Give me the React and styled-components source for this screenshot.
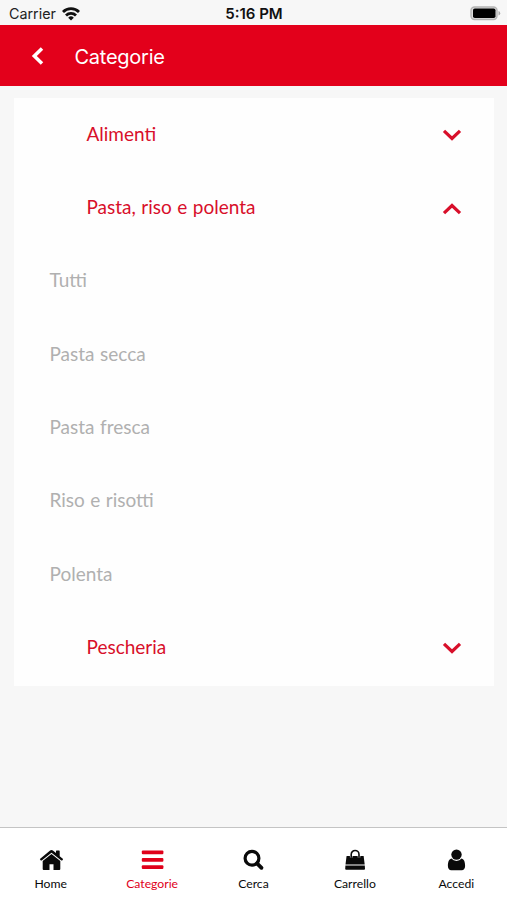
import React, { useState } from 'react';
import styled, { createGlobalStyle } from 'styled-components';

const GlobalStyle = createGlobalStyle`
  * {
    box-sizing: border-box;
  }
  body {
    margin: 0;
    background: #f7f7f7;
    font-family: Lato, 'Open Sans', sans-serif;
  }
`;

const Screen = styled.div`
  display: flex;
  flex-direction: column;
  height: 100vh;
  background: #f7f7f7;
`;

const StatusBar = styled.div`
  display: grid;
  grid-template-columns: 1fr auto 1fr;
  align-items: center;
  flex: none;
  height: 25px;
  padding: 2px 6px 0 9px;
  color: #222;
  font-family: Inter, sans-serif;
  font-size: 14.3px;
  line-height: 22px;
`;

const Carrier = styled.div`
  display: flex;
  align-items: center;
  gap: 6px;
`;

const Clock = styled.div`
  color: #111;
  font-size: 15px;
  font-weight: 600;
  margin-left: -2px;
`;

const Battery = styled.svg`
  justify-self: end;
  margin-top: -1px;
`;

const Header = styled.header`
  display: flex;
  align-items: center;
  flex: none;
  height: 61px;
  padding-left: 31px;
  background: #e3001b;
  color: #fff;
`;

const BackButton = styled.button`
  display: flex;
  width: 43.5px;
  padding: 0;
  border: 0;
  background: none;
  color: inherit;
`;

const Title = styled.h1`
  margin: 2px 0 0;
  font-family: Inter, sans-serif;
  font-size: 20px;
  font-weight: 400;
  letter-spacing: -0.25px;
`;

const Content = styled.main`
  flex: 1;
  padding: 12px 13px 0 14px;
`;

const Card = styled.div`
  padding-bottom: 1.6px;
  background: #fefefe;
`;

const Row = styled.div`
  display: flex;
  align-items: center;
  justify-content: space-between;
  height: 73.3px;
  font-size: 19px;
  line-height: 24px;
`;

const CategoryRow = styled(Row)`
  padding: 0 32px 0 72.5px;
  color: #d80f2a;
  cursor: pointer;
`;

const ItemRow = styled(Row)`
  padding-left: 35.5px;
  color: #b0b0b0;
`;

const Label = styled.span`
  margin-top: -1.5px;
  word-spacing: 0.6px;
`;

const Arrow = styled.svg`
  margin-top: ${(props) => (props.$open ? '2px' : '1px')};
  transform: ${(props) => (props.$open ? 'rotate(180deg)' : 'none')};
`;

const TabBar = styled.nav`
  display: grid;
  grid-template-columns: repeat(5, 1fr);
  flex: none;
  height: 73px;
  border-top: 1px solid #c4c4c4;
  background: #fff;
`;

const Tab = styled.div`
  display: flex;
  flex-direction: column;
  align-items: center;
  gap: 4px;
  padding-top: 20px;
  color: ${(props) => (props.$active ? '#e0001a' : '#0a0a0a')};
  font-size: 12.2px;
  line-height: 16px;
`;

const icons = {
  Home: (
    <svg width="24" height="24" viewBox="0 0 24 24" fill="currentColor">
      <path d="M12.500 6 3.700 13.100V21q0 1 1 1H10.500v-5.800h4V22h5.800q1 0 1-1v-7.900z" />
      <path d="M12.500 2q.8 0 1.400.5L17 5.100V3.200q0-.6.600-.6h2.500q.6 0 .6.600v5l3.100 2.600q.4.400.100.800l-.7.800q-.4.400-.9 0L12.500 4.700l-9.800 7.700q-.5.400-.9 0l-.7-.8q-.4-.4.100-.8l9.900-8.300Q11.700 2 12.500 2z" />
    </svg>
  ),
  Categorie: (
    <svg width="24" height="24" viewBox="0 0 24 24" fill="currentColor">
      <rect x="1.800" y="2.500" width="21.600" height="3.800" rx="1" />
      <rect x="1.800" y="9.900" width="21.600" height="3.800" rx="1" />
      <rect x="1.800" y="17.200" width="21.600" height="3.800" rx="1" />
    </svg>
  ),
  Cerca: (
    <svg width="24" height="24" viewBox="0 0 24 24" fill="none" stroke="currentColor">
      <circle cx="11" cy="10.200" r="6.900" strokeWidth="3.200" />
      <path d="m16 15.300 4.500 4.500" strokeWidth="3.800" strokeLinecap="round" />
    </svg>
  ),
  Carrello: (
    <svg width="24" height="24" viewBox="0 0 24 24" fill="currentColor">
      <path d="M3.600 8h17l1.100 8.500H2.500z" />
      <path d="M2.400 17.400h19.400l.2 3.400q0 .9-.9.900H3.100q-.9 0-.9-.9z" />
      <path d="M8.200 9.500V6.400a3.900 3.900 0 0 1 7.800 0v3.100" fill="none" stroke="#fff" strokeWidth="2.600" />
      <path d="M8.200 9.800V6.400a3.900 3.900 0 0 1 7.800 0v3.400" fill="none" stroke="currentColor" strokeWidth="1.600" />
    </svg>
  ),
  Accedi: (
    <svg width="24" height="24" viewBox="0 0 24 24" fill="currentColor">
      <circle cx="12.500" cy="6.600" r="5.200" />
      <path d="M7.400 10.600a6.800 6.800 0 0 0 10.200 0c2.700.8 3.500 3.700 3.500 7.400 0 2.500-1.300 4.200-3.400 4.200H7.300c-2.100 0-3.400-1.700-3.400-4.200 0-3.700.8-6.600 3.500-7.400z" />
    </svg>
  ),
};

const categories = [
  { name: 'Alimenti', items: [] },
  {
    name: 'Pasta, riso e polenta',
    items: ['Tutti', 'Pasta secca', 'Pasta fresca', 'Riso e risotti', 'Polenta'],
  },
  { name: 'Pescheria', items: [] },
];

export default function App() {
  const [open, setOpen] = useState('Pasta, riso e polenta');

  function toggle(name) {
    setOpen(open === name ? null : name);
  }

  return (
    <Screen>
      <GlobalStyle />
      <StatusBar>
        <Carrier>
          Carrier
          <svg width="18" height="14" viewBox="0 0 18 14" fill="none" stroke="#111" strokeWidth="2.800">
            <path d="M1 5a11.300 11.300 0 0 1 16 0" />
            <path d="M4 8.400a7.100 7.100 0 0 1 10 0" />
            <path d="M9 13.500 6.200 10.700a4 4 0 0 1 5.600 0z" fill="#111" stroke="none" />
          </svg>
        </Carrier>
        <Clock>5:16 PM</Clock>
        <Battery width="31" height="15" viewBox="0 0 31 15">
          <rect x="1" y="1" width="26" height="12.500" rx="3.500" fill="#ddd" stroke="#b4b4b4" strokeWidth="1.400" />
          <rect x="3" y="2.500" width="22.500" height="9.500" rx="1.800" fill="#000" />
          <path d="M28.500 5v4.500q1.700-.6 1.700-2.250T28.500 5z" fill="#aaa" />
        </Battery>
      </StatusBar>
      <Header>
        <BackButton aria-label="Indietro">
          <svg width="13" height="18" viewBox="0 0 13 18" fill="none" stroke="currentColor" strokeWidth="3.500">
            <path d="M11 1.500 3.300 9l7.700 7.500" />
          </svg>
        </BackButton>
        <Title>Categorie</Title>
      </Header>
      <Content>
        <Card>
          {categories.map((category) => (
            <React.Fragment key={category.name}>
              <CategoryRow onClick={() => toggle(category.name)}>
                <Label>{category.name}</Label>
                <Arrow
                  $open={open === category.name}
                  width="20"
                  height="12"
                  viewBox="0 0 20 12"
                  fill="none"
                  stroke="currentColor"
                  strokeWidth="3.200"
                >
                  <path d="m2 1.800 8 7.700 8-7.700" />
                </Arrow>
              </CategoryRow>
              {open === category.name &&
                category.items.map((item) => (
                  <ItemRow key={item}>
                    <Label>{item}</Label>
                  </ItemRow>
                ))}
            </React.Fragment>
          ))}
        </Card>
      </Content>
      <TabBar>
        {Object.keys(icons).map((name) => (
          <Tab key={name} $active={name === 'Categorie'}>
            {icons[name]}
            <span>{name}</span>
          </Tab>
        ))}
      </TabBar>
    </Screen>
  );
}
